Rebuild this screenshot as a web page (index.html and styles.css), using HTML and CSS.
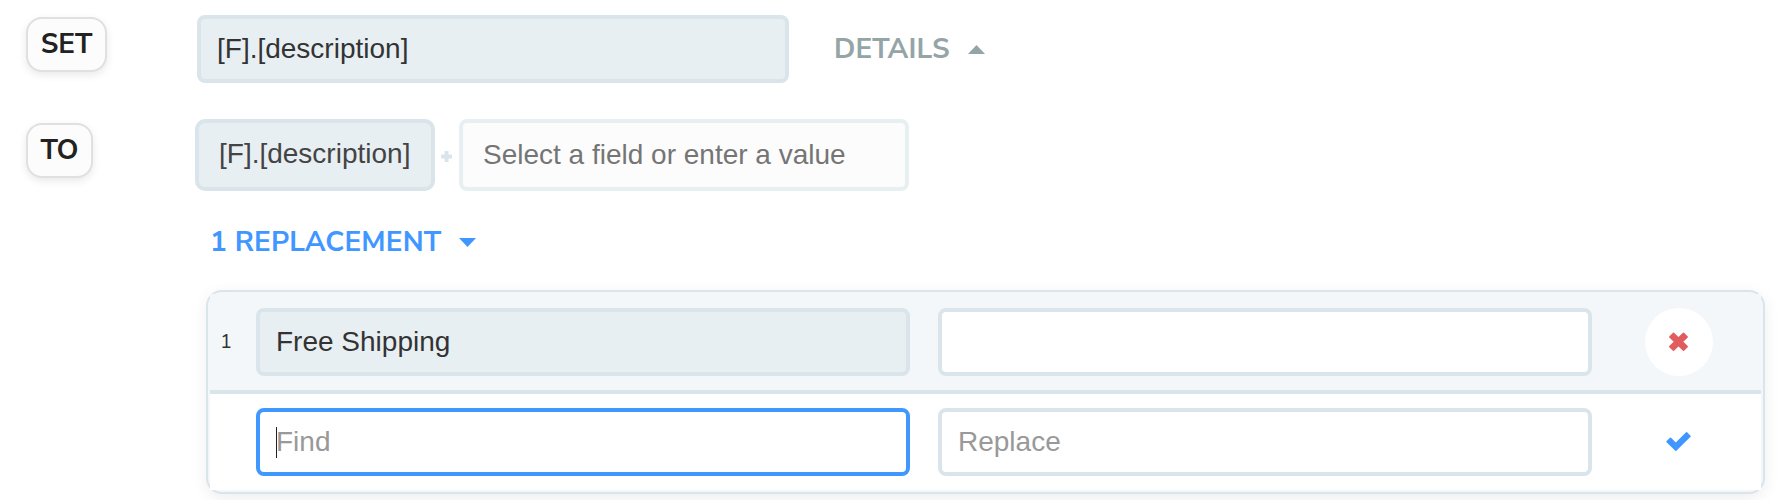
FILE: index.html
```
<!DOCTYPE html>
<html lang="en">
<head>
  <meta charset="UTF-8" />
  <meta name="viewport" content="width=device-width, initial-scale=1.0"/>
  <title>Replace Rule</title>
  <link rel="stylesheet" href="styles.css">
</head>
<body>
  <div class="rule-row set-row">
    <div class="label-col"><span class="pill">SET</span></div>
    <div class="field set-field">[F].[description]</div>
    <a class="toggle details"><span class="details-text">DETAILS</span>
      <svg class="caret" width="17" height="9" viewBox="0 0 17 9"><path d="M8.5 0L17 9H0z"/></svg>
    </a>
  </div>

  <div class="rule-row to-row">
    <div class="label-col"><span class="pill pill-to">TO</span></div>
    <div class="field to-field">[F].[description]</div>
    <svg class="plus" width="13" height="13" viewBox="0 0 13 13"><path d="M6.5 1v11M1 6.500h11"/></svg>
    <input class="field select-field" type="text" placeholder="Select a field or enter a value">
  </div>

  <a class="toggle replacements"><span class="replacements-text">1 REPLACEMENT</span>
    <svg class="caret" width="17" height="9" viewBox="0 0 17 9"><path d="M0 0h17L8.500 9z"/></svg>
  </a>

  <div class="panel">
    <div class="replace-row saved">
      <span class="num">1</span>
      <div class="field">Free Shipping</div>
      <input class="field blank" type="text">
      <button class="action remove">
        <svg width="20" height="20" viewBox="0 0 20 20"><path d="M4.500 1.300L9.500 6.100L14.500 1.300L18.200 5L13.300 9.800L18.200 14.600L14.500 18.300L9.500 13.500L4.500 18.300L.8 14.600L5.700 9.800L.8 5z"/></svg>
      </button>
    </div>
    <div class="replace-row">
      <span class="num"></span>
      <div class="field blank focused"><span class="cursor"></span>Find</div>
      <input class="field blank" type="text" placeholder="Replace">
      <button class="action confirm">
        <svg width="26" height="20" viewBox="0 0 26 20"><path d="M4.500 6.300L9.800 11.600L20.600 .9L24 4.200L9.800 18.200L1.100 9.600z"/></svg>
      </button>
    </div>
  </div>
</body>
</html>
```
FILE: styles.css
```
* {
  box-sizing: border-box;
}

body {
  font-family: "Liberation Sans", Arial, sans-serif;
  font-size: 28px;
  margin: 0;
  height: 500px;
  overflow: hidden;
  background: #fff;
  color: #333;
}

.rule-row {
  display: flex;
  align-items: flex-start;
}

.set-row {
  padding: 15px 0 0 26px;
}

.to-row {
  padding: 36px 0 0 26px;
}

.label-col {
  width: 171px;
  padding-top: 2px;
}

.to-row .label-col {
  width: 169px;
  padding-top: 4px;
}

.pill {
  display: flex;
  align-items: center;
  justify-content: center;
  width: 81px;
  height: 55px;
  padding-bottom: 1px;
  border: 2px solid #e0e0e0;
  border-radius: 16px;
  background: #fcfcfc;
  box-shadow: 0 3px 8px rgba(0,0,0,0.09);
  color: #222;
  font-family: "Nunito Sans", Lato, sans-serif;
  font-weight: 700;
}

.pill-to {
  width: 67px;
}

.field {
  display: flex;
  align-items: center;
  height: 68px;
  padding: 0 16px;
  border: 4px solid #dae5eb;
  border-radius: 8px;
  background: #e8eff3;
  color: #333;
  font: inherit;
  outline: none;
}

.set-field {
  width: 592px;
}

.to-field {
  width: 240px;
  height: 72px;
  padding: 0 0 2px 20px;
  border-radius: 10px;
  color: #444;
}

.select-field {
  width: 450px;
  height: 72px;
  padding: 0 20px;
  border-color: #e8eff3;
  background: #fcfcfc;
}

.select-field::placeholder {
  color: #757575;
}

.plus {
  margin: 31px 6px 0 5px;
  flex: none;
  fill: none;
  stroke: #dae5eb;
  stroke-width: 4;
}

.toggle {
  display: flex;
  align-items: center;
  height: 34px;
  font-family: "Nunito Sans", Lato, sans-serif;
  font-weight: 700;
}

.caret {
  fill: currentColor;
}

.details {
  margin: 17px 0 0 45px;
  gap: 18px;
  color: #95a5a6;
  letter-spacing: 0.15px;
}

.replacements {
  margin: 34px 0 0 210px;
  gap: 18px;
  color: #3f97ff;
  letter-spacing: 0.15px;
}

.panel {
  width: 1559px;
  height: 204px;
  margin: 31px 0 0 206px;
  padding: 2px;
  border: 2px solid #dae5eb;
  border-radius: 16px;
  background: #f3f7fa;
  box-shadow: 0 4px 16px rgba(0,0,0,0.07);
}

.replace-row {
  display: grid;
  grid-template-columns: 18px 654px 654px 68px;
  column-gap: 28px;
  align-items: center;
  height: 96px;
  background: #fff;
}

.replace-row.saved {
  height: 100px;
  border-bottom: 4px solid #dae5eb;
  background: #f3f7fa;
}

.num {
  padding: 0 0 2px 10px;
  font-family: "Nunito Sans", Lato, sans-serif;
  font-size: 20px;
}

.field.blank {
  background: #fff;
}

.field.blank::placeholder {
  color: #999;
}

.field.focused {
  position: relative;
  border-color: #3f97ff;
  color: #999;
}

.cursor {
  position: absolute;
  left: 16px;
  top: 15px;
  width: 1px;
  height: 31px;
  background: #222;
}

.action {
  display: flex;
  align-items: center;
  justify-content: center;
  width: 68px;
  height: 68px;
  margin-left: 25px;
  padding: 0;
  border: 0;
  border-radius: 50%;
  background: #fff;
}

.action svg {
  stroke-width: 1.5;
  stroke-linejoin: round;
}

.remove svg {
  fill: #e15d5d;
  stroke: #e15d5d;
}

.confirm svg {
  fill: #3f97ff;
  stroke: #3f97ff;
}
```
